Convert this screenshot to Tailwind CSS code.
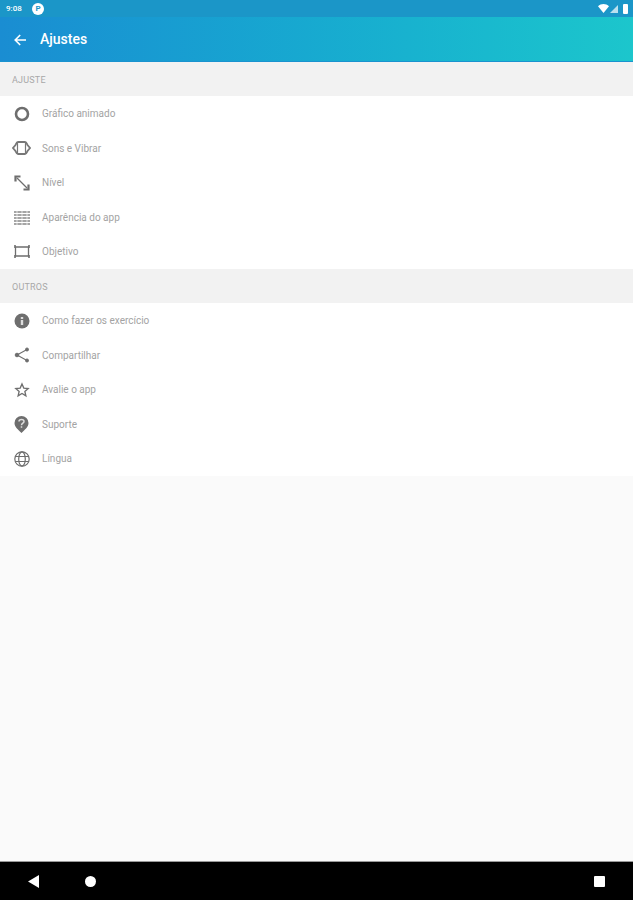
<!DOCTYPE html>
<html lang="pt">
<head>
    <meta charset="UTF-8" />
    <meta name="viewport" content="width=device-width, initial-scale=1" />
    <title>Ajustes</title>
    <script src="https://cdn.jsdelivr.net/npm/@tailwindcss/browser@4"></script>
</head>
<body class="bg-[#fafafa] font-['Roboto',sans-serif] h-[900px] w-[633px] overflow-hidden flex flex-col">

    <!-- Status bar + toolbar -->
    <header class="h-[62px] shrink-0 flex flex-col">
        <div class="h-[17px] bg-[#1b96c8] flex items-center justify-between pl-[6px] pr-[5px] text-white">
            <div class="flex items-center gap-[7px]">
                <span class="text-[8px] font-medium leading-none w-[19px]">9:08</span>
                <span class="w-[12px] h-[12px] rounded-full bg-white flex items-center justify-center text-[#1b96c8] text-[8px] font-bold leading-none">P</span>
            </div>
            <div class="flex items-center gap-[1px]">
                <svg width="11" height="9" viewBox="0 0 11 9"><path d="M0 2.2C3-.7 8-.7 11 2.2L5.500 9z" fill="#fff"/></svg>
                <svg width="8" height="8" viewBox="0 0 8 8"><path d="M8 0v8H0z" fill="#fff" fill-opacity=".7"/></svg>
                <div class="w-[5px] h-[10px] bg-white rounded-[1px] ml-[4px]"></div>
            </div>
        </div>
        <div class="flex-1 bg-gradient-to-r from-[#1a8dd2] to-[#1cc6cc] border-b border-[#1a93cf] flex items-center pl-[14px] pt-[1px] text-white">
            <svg width="12" height="12" viewBox="0 0 12 12" fill="none" stroke="#fff" stroke-width="1.600"><path d="M12 6H1.500M6.200 1 1.200 6l5 5"/></svg>
            <h1 class="ml-[14px] text-[14px] font-medium">Ajustes</h1>
        </div>
    </header>

    <!-- Ajuste -->
    <div class="h-[34px] shrink-0 bg-[#f2f2f2] flex items-center pl-3 pt-1 text-[9px] text-[#a8a8a8] tracking-[0.2px]">AJUSTE</div>
    <ul class="bg-white h-[173px] shrink-0 grid grid-rows-5 text-[10px] text-[#a3a3a3]">
        <li class="flex items-center pt-[1px]">
            <span class="w-[42px] pl-[1px] flex justify-center"><svg width="16" height="16" viewBox="0 0 16 16" fill="none" stroke="#6e6e6e" stroke-width="2.600"><circle cx="8" cy="8" r="6"/></svg></span>Gráfico animado
        </li>
        <li class="flex items-center pt-[1px]">
            <span class="w-[42px] pl-[1px] flex justify-center"><svg width="19" height="16" viewBox="0 0 19 16" fill="none" stroke="#777" stroke-width="1.800"><path d="M6 2h7c1.500 0 2 2 2.500 3L18 8l-2.500 3c-.5 1-1 3-2.500 3H6c-1.500 0-2-2-2.500-3L1 8l2.500-3C4 4 4.500 2 6 2z"/><path d="M5.500 3v10M13.500 3v10" stroke-width="1.200"/></svg></span>Sons e Vibrar
        </li>
        <li class="flex items-center pt-[1px]">
            <span class="w-[42px] pl-[1px] flex justify-center"><svg width="16" height="16" viewBox="0 0 16 16" fill="none" stroke="#6e6e6e"><path d="M3 3 13 13" stroke-width="1.300"/><path d="M1.500 6.500V1.500h5M14.500 9.500v5h-5" stroke-width="2.200"/></svg></span>Nível
        </li>
        <li class="flex items-center pt-[1px]">
            <span class="w-[42px] pl-[1px] flex justify-center"><svg width="16" height="14" viewBox="0 0 16 14" fill="none" stroke="#888" stroke-width="1.300"><path d="M0 1h16M0 4h16M0 7h16M0 10h16M0 13h16"/><path d="M3 0v14M8 0v14M13 0v14" stroke="#fff" stroke-width=".7"/></svg></span>Aparência do app
        </li>
        <li class="flex items-center">
            <span class="w-[42px] pl-[1px] flex justify-center"><svg width="16" height="13" viewBox="0 0 16 13" fill="none" stroke="#6e6e6e"><path d="M1.500 2h13v9h-13z" stroke-width="1.300"/><path d="M1 0v3M15 0v3M1 10v3M15 10v3" stroke-width="1.600"/></svg></span>Objetivo
        </li>
    </ul>

    <!-- Outros -->
    <div class="h-[34px] shrink-0 bg-[#f2f2f2] flex items-center pl-3 pt-1 text-[9px] text-[#a8a8a8] tracking-[0.2px]">OUTROS</div>
    <ul class="bg-white h-[173px] shrink-0 grid grid-rows-5 text-[10px] text-[#a3a3a3]">
        <li class="flex items-center pt-[1px]">
            <span class="w-[42px] pl-[1px] flex justify-center"><svg width="16" height="16" viewBox="0 0 16 16"><circle cx="8" cy="8" r="7.500" fill="#6e6e6e"/><path d="M6.800 7h2.400v5H6.800zM6.800 4h2.400v2H6.800z" fill="#ddd"/></svg></span>Como fazer os exercício
        </li>
        <li class="flex items-center pt-[1px]">
            <span class="w-[42px] pl-[1px] flex justify-center"><svg width="16" height="16" viewBox="0 0 16 16" fill="#6e6e6e" stroke="#6e6e6e"><path d="M13 2.500 3 8l10 5.500" fill="none" stroke-width="1.100"/><circle cx="13" cy="2.500" r="1.500"/><circle cx="3" cy="8" r="1.800"/><circle cx="13" cy="13.500" r="1.500"/></svg></span>Compartilhar
        </li>
        <li class="flex items-center pt-[1px]">
            <span class="w-[42px] pl-[1px] flex justify-center"><svg width="16" height="16" viewBox="0 0 24 24" fill="none" stroke="#6e6e6e" stroke-width="2"><path d="m12 3 2.700 6.100 6.600.7-5 4.400 1.500 6.500L12 17.300l-5.800 3.400 1.500-6.500-5-4.400 6.600-.7z"/></svg></span>Avalie o app
        </li>
        <li class="flex items-center">
            <span class="w-[42px] pl-[1px] flex justify-center"><svg width="15" height="17" viewBox="0 0 15 17"><path d="M7.500 0a7 7 0 0 1 7 7c0 4-3.500 6.500-7 10-3.500-3.500-7-6-7-10a7 7 0 0 1 7-7z" fill="#6e6e6e"/><path d="M5 5.500C5 2.800 10 2.800 10 5.500 10 7.200 7.500 7.200 7.500 9.200M7.500 10.300v1.500" fill="none" stroke="#ddd" stroke-width="1.500"/></svg></span>Suporte
        </li>
        <li class="flex items-center">
            <span class="w-[42px] pl-[1px] flex justify-center"><svg width="16" height="16" viewBox="0 0 16 16" fill="none" stroke="#6e6e6e" stroke-width="1.200"><circle cx="8" cy="8" r="7.200"/><ellipse cx="8" cy="8" rx="3.300" ry="7.200"/><path d="M1.200 5.500h13.600M1.200 10.500h13.600"/></svg></span>Língua
        </li>
    </ul>

    <div class="flex-1"></div>

    <!-- Navigation bar -->
    <nav class="h-[39px] shrink-0 bg-black flex items-center justify-between pl-[28px] pr-[28px] border-t border-[#999]">
        <div class="flex items-center gap-[46px]">
            <svg width="11" height="13" viewBox="0 0 11 13"><path d="M11 0v13L0 6.500z" fill="#fff"/></svg>
            <div class="w-[11px] h-[11px] rounded-full bg-white"></div>
        </div>
        <div class="w-[11px] h-[11px] rounded-[1px] bg-white"></div>
    </nav>
</body>
</html>
